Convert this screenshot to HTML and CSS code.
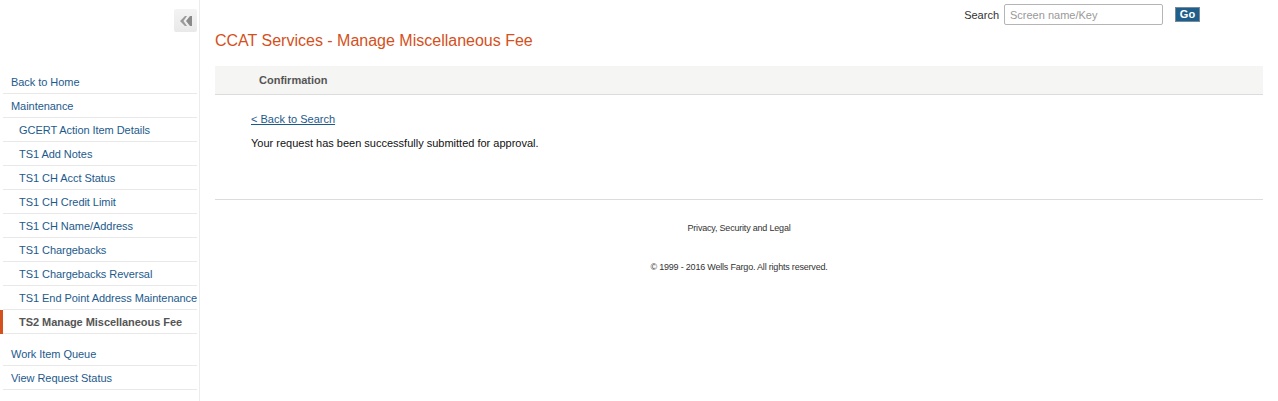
FILE: index.html
```html
<!DOCTYPE html>
<html lang="en">
<head>
<meta charset="utf-8">
<title>CCAT Services - Manage Miscellaneous Fee</title>
<link rel="stylesheet" href="styles.css">
</head>
<body>
<div class="page">
  <aside class="sidebar">
    <div class="side-top">
      <button class="collapse" aria-label="Collapse">
        <svg width="12" height="10" viewBox="0 0 12 10"><path d="M5 0 L0 5 L5 10 L7 10 L3.5 5 L7 0 Z" fill="#9a9a9a"/><path d="M10 0 L6 5 L10 10 L12 10 L12 0 Z" fill="#8a8a8a"/></svg>
      </button>
    </div>
    <ul class="nav">
      <li class="item"><a href="#">Back to Home</a></li>
      <li class="item"><a href="#">Maintenance</a></li>
      <li class="item sub"><a href="#">GCERT Action Item Details</a></li>
      <li class="item sub"><a href="#">TS1 Add Notes</a></li>
      <li class="item sub"><a href="#">TS1 CH Acct Status</a></li>
      <li class="item sub"><a href="#">TS1 CH Credit Limit</a></li>
      <li class="item sub"><a href="#">TS1 CH Name/Address</a></li>
      <li class="item sub"><a href="#">TS1 Chargebacks</a></li>
      <li class="item sub"><a href="#">TS1 Chargebacks Reversal</a></li>
      <li class="item sub"><a href="#">TS1 End Point Address Maintenance</a></li>
      <li class="item sub active"><a href="#">TS2 Manage Miscellaneous Fee</a></li>
      <li class="item group-start"><a href="#">Work Item Queue</a></li>
      <li class="item"><a href="#">View Request Status</a></li>
    </ul>
  </aside>
  <main class="main">
    <div class="header">
      <label class="search-label" for="q">Search</label>
      <input id="q" class="search-input" type="text" placeholder="Screen name/Key">
      <button class="go">Go</button>
    </div>
    <h1 class="title">CCAT Services - Manage Miscellaneous Fee</h1>
    <div class="bar">Confirmation</div>
    <div class="content">
      <a class="back" href="#">&lt; Back to Search</a>
      <p class="msg">Your request has been successfully submitted for approval.</p>
    </div>
    <footer class="footer">
      <div class="legal">Privacy, Security and Legal</div>
      <div class="copy">&copy; 1999 - 2016 Wells Fargo. All rights reserved.</div>
    </footer>
  </main>
</div>
</body>
</html>
```
FILE: styles.css
```css
* { box-sizing: border-box; }
html, body { margin: 0; padding: 0; background: #fff; }
body {
  font-family: "Liberation Sans", Arial, sans-serif;
  font-size: 11px;
  color: #222;
}
.page { display: flex; min-height: 401px; }
.sidebar {
  width: 200px;
  flex: none;
  border-right: 1px solid #ececec;
}
.side-top { height: 70px; padding-top: 9px; padding-left: 174px; }
.collapse {
  width: 23px; height: 23px;
  padding: 0; margin: 0;
  border: none; border-radius: 2px;
  background: linear-gradient(#f3f3f3, #e9e9e9);
  display: flex; align-items: center; justify-content: center;
}
.nav { list-style: none; margin: 0; padding: 0; }
.item {
  margin-left: 3px;
  margin-right: 2px;
  height: 24px;
  padding-top: 1px;
  line-height: 22px;
  border-bottom: 1px solid #e9e9e9;
  padding-left: 8px;
  white-space: nowrap;
}
.item a { color: #1d5a8c; text-decoration: none; letter-spacing: -0.05px; }
.item.sub { padding-left: 16px; }
.item.active { box-shadow: -3px 0 0 #d4501c; }
.item.active a { color: #555; font-weight: bold; }
.item.group-start { margin-top: 8px; }

.main { flex: 1; padding: 0 15px; min-width: 0; }
.header {
  display: flex; justify-content: flex-end; align-items: center;
  padding-top: 4px; padding-right: 63px; height: 25px;
}
.search-label { color: #333; margin-right: 5px; }
.search-input {
  width: 159px; height: 21px;
  border: 1px solid #b5b5b5; border-radius: 2px;
  padding: 0 5px;
  font-family: "Liberation Sans", Arial, sans-serif;
  font-size: 11px; color: #333;
}
.search-input::placeholder { color: #999; }
.go {
  margin-left: 12px;
  width: 25px; height: 15px;
  padding: 0;
  background: #1f5f8b;
  border: 1px solid #7a8a98;
  color: #fff;
  font-family: "Liberation Sans", Arial, sans-serif;
  font-size: 11px; font-weight: bold;
  line-height: 13px;
}
.title {
  margin: 6px 0 0;
  font-size: 16px; font-weight: normal;
  line-height: 20px;
  color: #d4501c;
}
.bar {
  margin-top: 15px;
  height: 29px;
  line-height: 28px;
  background: #f5f5f3;
  border-bottom: 1px solid #dcdcdc;
  padding-left: 44px;
  font-weight: bold;
  color: #555;
}
.content { padding: 17px 0 0 36px; height: 105px; border-bottom: 1px solid #dcdcdc; }
.back { color: #1d5a8c; text-decoration: underline; line-height: 14px; display: inline-block; }
.msg { margin: 10px 0 0; line-height: 14px; color: #111; }
.footer { text-align: center; color: #333; font-size: 9px; letter-spacing: -0.2px; }
.legal { margin-top: 23px; line-height: 11px; }
.copy { margin-top: 28px; line-height: 11px; }
```
